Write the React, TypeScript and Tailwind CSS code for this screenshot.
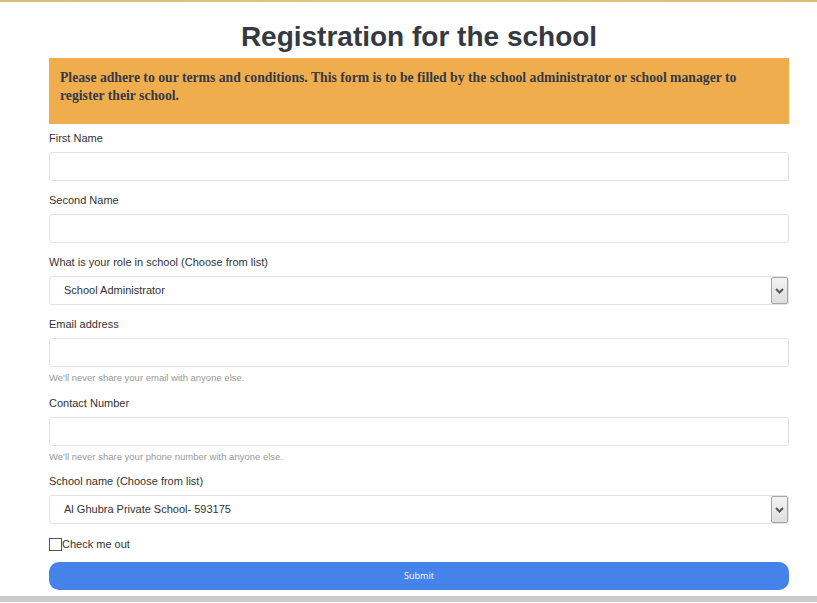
import React, { useState } from 'react';

const roles = ['School Administrator', 'School Manager'];
const schools = ['Al Ghubra Private School- 593175'];

function Label({ children }: { children: React.ReactNode }): React.JSX.Element {
  return <label className="mb-[7px] block h-[14px] text-[11px] leading-[14px] text-[#333]">{children}</label>;
}

function TextField({ label, help }: { label: string; help?: string }): React.JSX.Element {
  return (
    <div>
      <Label>{label}</Label>
      <input
        type="text"
        className="block h-[29px] w-full rounded-[3px] border border-[#e2e2e2] bg-white px-3 text-[11px] outline-none"
      />
      {help && <div className="mt-[5px] h-[11.5px] text-[9.5px] leading-[11px] text-[#999]">{help}</div>}
    </div>
  );
}

function SelectField({ label, options }: { label: string; options: string[] }): React.JSX.Element {
  const [value, setValue] = useState(options[0]);
  return (
    <div>
      <Label>{label}</Label>
      <div className="relative h-[29px] w-full rounded-[3px] border border-[#e2e2e2] bg-white">
        <select
          value={value}
          onChange={event => setValue(event.target.value)}
          className="h-full w-full appearance-none bg-transparent pl-[14px] pr-6 text-[11px] text-[#333] outline-none"
        >
          {options.map(option => <option key={option}>{option}</option>)}
        </select>
        {/* the native-looking arrow box */}
        <span className="pointer-events-none absolute top-0 right-0 flex h-[27px] w-[17px] items-center justify-center rounded-[2px] border border-[#a6a6a6] bg-gradient-to-b from-[#f4f4f4] to-[#dedede]">
          <svg width="9" height="6" viewBox="0 0 9 6">
            <path d="M1 1 L4.5 4.5 L8 1" fill="none" stroke="#555" strokeWidth="2" />
          </svg>
        </span>
      </div>
    </div>
  );
}

export default function App(): React.JSX.Element {
  const [checked, setChecked] = useState(false);

  return (
    <div className="h-[603px] overflow-hidden bg-white font-['Liberation_Sans',Arial,sans-serif]">
      <div className="h-[2px] bg-gradient-to-r from-[#d6bd7f] via-[#e2c683] to-[#d9bd78]" />
      <div className="mr-[28px] ml-[49px]">
        <h1 className="mt-[16px] mb-[2px] h-[38px] text-center text-[28px] leading-[38px] font-bold text-[#343a40]">
          Registration for the school
        </h1>
        <div className="h-[66px] bg-[#f0ad4e] pt-[11px] pr-4 pl-[11px] font-['Liberation_Serif',Georgia,serif] text-[13.7px] leading-[18px] font-bold text-[#333a45]">
          Please adhere to our terms and conditions. This form is to be filled by the school administrator or school
          manager to register their school.
        </div>
        <form className="mt-[7px] flex flex-col gap-[12px]" onSubmit={event => event.preventDefault()}>
          <TextField label="First Name" />
          <TextField label="Second Name" />
          <SelectField label="What is your role in school (Choose from list)" options={roles} />
          <TextField label="Email address" help="We'll never share your email with anyone else." />
          <TextField label="Contact Number" help="We'll never share your phone number with anyone else." />
          <SelectField label="School name (Choose from list)" options={schools} />
          <label className="mt-[1.5px] -mb-[2px] flex h-[14px] items-center text-[11px] text-[#333]">
            <input
              type="checkbox"
              checked={checked}
              onChange={event => setChecked(event.target.checked)}
              className="m-0 h-[13px] w-[13px] appearance-none border border-[#555] bg-white checked:bg-[#4582ea]"
            />
            Check me out
          </label>
          <button
            type="submit"
            className="h-[28px] w-full rounded-[10px] bg-[#4582ea] font-['Open_Sans',sans-serif] text-[9px] text-white"
          >
            Submit
          </button>
        </form>
      </div>
      <div className="mt-[6px] h-[6px] bg-[#cbcbcb]" />
    </div>
  );
}
